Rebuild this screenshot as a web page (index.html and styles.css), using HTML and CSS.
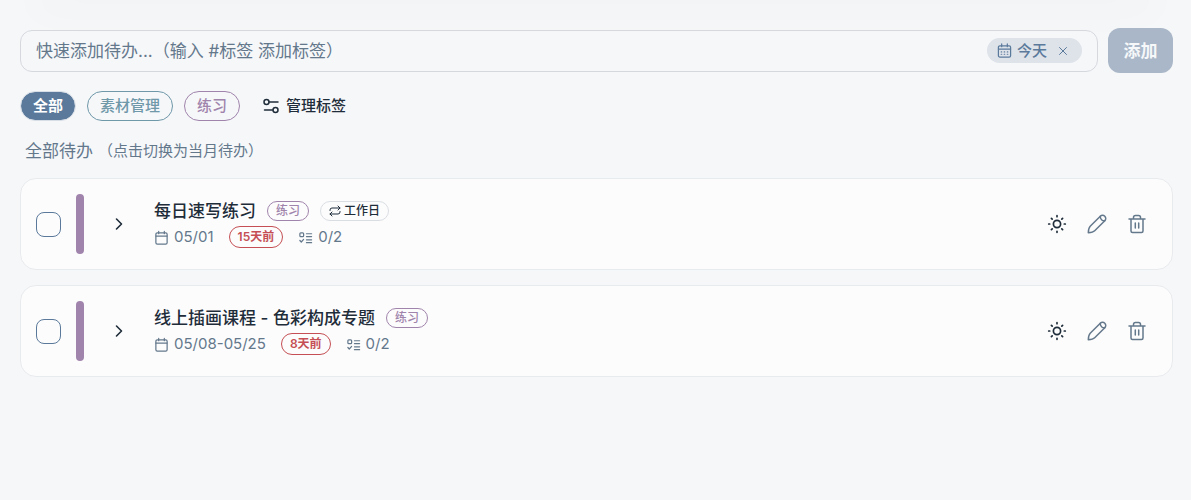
FILE: index.html
```html
<!DOCTYPE html>
<html lang="zh-CN">
<head>
  <meta charset="UTF-8">
  <meta name="viewport" content="width=device-width, initial-scale=1.0">
  <title>待办</title>
  <link rel="stylesheet" href="styles.css">
</head>
<body>
  <svg class="sprite" aria-hidden="true">
    <symbol id="i-cal" viewBox="0 0 16 16"><rect x="2" y="3" width="12" height="12" rx="1.5"/><path d="M2 6.5h12M5 1.5V4M11 1.5V4"/></symbol>
    <symbol id="i-check" viewBox="0 0 16 16"><rect x="2" y="3" width="4" height="4" rx="1"/><path d="M2 11.2l1.5 1.6L6 10M9 4H14.500M9 7H14.500M9 10.500H14.500M9 13.500H14.500"/></symbol>
    <symbol id="i-chevron" viewBox="0 0 16 16"><path d="M5.5 3l5 5-5 5"/></symbol>
    <symbol id="i-sun" viewBox="0 0 20 20"><circle cx="10" cy="10" r="3.6"/><path d="M10 1.7v1M10 17.3v1M1.7 10h1M17.3 10h1M4.400 4.400l.8.8M14.800 14.800l.8.8M4.400 15.600l.8-.8M14.800 5.200l.8-.8"/></symbol>
    <symbol id="i-pencil" viewBox="0 0 20 20"><path d="M13.300 2.200L3.200 12.300C2.200 13.300 1.400 16.200 1.300 18.700c2.500-.1 5.400-.9 6.400-1.900L17.800 6.700"/><path d="M13.300 2.200a3.100 3.100 0 0 1 4.500 4.500c-2.200.6-5-1.700-4.500-4.500z"/></symbol>
    <symbol id="i-trash" viewBox="0 0 20 20"><path d="M2 5h16M4 5v12a1.500 1.500 0 0 0 1.500 1.500h9A1.500 1.500 0 0 0 16 17V5M6.500 5V3.500A2 2 0 0 1 8.500 1.500h3a2 2 0 0 1 2 2V5M8.300 9v5M11.700 9v5"/></symbol>
  </svg>

  <header class="topbar"></header>

  <main class="page">
    <form class="quick-add">
      <div class="field">
        <input type="text" aria-label="快速添加待办" placeholder="快速添加待办...（输入 #标签 添加标签）">
        <button type="button" class="date-chip">
          <svg class="icon" viewBox="0 0 16 16"><rect x="1.5" y="3" width="13" height="12" rx="1.5"/><path d="M1.5 6.5h13M5 1v3M11 1v3"/><path d="M4.5 9.5h.5M7.700 9.500h.5M11 9.500h.5M4.500 12h.5M7.700 12h.5M11 12h.5"/></svg>
          今天
          <svg class="close" viewBox="0 0 10 10"><path d="M1.5 1.5l7 7M8.5 1.5l-7 7"/></svg>
        </button>
      </div>
      <button type="submit" class="add">添加</button>
    </form>

    <div class="filters">
      <button class="filter active">全部</button>
      <button class="filter teal">素材管理</button>
      <button class="filter purple">练习</button>
      <button class="manage">
        <svg viewBox="0 0 16 16"><circle cx="3.5" cy="4" r="2.5"/><path d="M6.5 4H15"/><circle cx="12.5" cy="12" r="2.5"/><path d="M9.5 12H1.5"/></svg>
        管理标签
      </button>
    </div>

    <button class="scope">全部待办<small>（点击切换为当月待办）</small></button>

    <ul class="todos">
      <li class="todo">
        <input type="checkbox" aria-label="完成 每日速写练习">
        <span class="stripe"></span>
        <button class="expand" aria-label="展开"><svg><use href="#i-chevron"/></svg></button>
        <div class="body">
          <div class="title">
            <span>每日速写练习</span>
            <span class="tag">练习</span>
            <span class="tag repeat"><svg viewBox="0 0 12 12"><path d="M1 5.5V5q0-2 2-2h8M9 1l2 2-2 2M11 6.5V7q0 2-2 2H1M3 7L1 9l2 2"/></svg>工作日</span>
          </div>
          <div class="meta">
            <span class="info"><svg><use href="#i-cal"/></svg>05/01</span>
            <span class="overdue">15天前</span>
            <span class="info"><svg><use href="#i-check"/></svg>0/2</span>
          </div>
        </div>
        <div class="actions">
          <button class="dark" aria-label="加入今天"><svg><use href="#i-sun"/></svg></button>
          <button aria-label="编辑"><svg><use href="#i-pencil"/></svg></button>
          <button aria-label="删除"><svg><use href="#i-trash"/></svg></button>
        </div>
      </li>
      <li class="todo">
        <input type="checkbox" aria-label="完成 线上插画课程">
        <span class="stripe"></span>
        <button class="expand" aria-label="展开"><svg><use href="#i-chevron"/></svg></button>
        <div class="body">
          <div class="title">
            <span>线上插画课程 - 色彩构成专题</span>
            <span class="tag">练习</span>
          </div>
          <div class="meta">
            <span class="info"><svg><use href="#i-cal"/></svg>05/08-05/25</span>
            <span class="overdue">8天前</span>
            <span class="info"><svg><use href="#i-check"/></svg>0/2</span>
          </div>
        </div>
        <div class="actions">
          <button class="dark" aria-label="加入今天"><svg><use href="#i-sun"/></svg></button>
          <button aria-label="编辑"><svg><use href="#i-pencil"/></svg></button>
          <button aria-label="删除"><svg><use href="#i-trash"/></svg></button>
        </div>
      </li>
    </ul>
  </main>
</body>
</html>
```
FILE: styles.css
```css
* { box-sizing: border-box; }
body { margin: 0; background: #f6f7f9; color: #1f2d3a; font-family: Inter, "Noto Sans CJK SC", sans-serif; font-size: 15px; line-height: 20px; }
button, input { font: inherit; color: inherit; margin: 0; }
button { background: none; border: 0; padding: 0; cursor: pointer; }
svg { display: block; flex: none; fill: none; stroke: currentColor; stroke-width: 1.3; stroke-linecap: round; stroke-linejoin: round; }
.sprite { display: none; }

.topbar { height: 0; margin: 0 40px; box-shadow: 0 0 40px 6px rgba(31, 45, 58, 0.05); }
.page { padding: 28px 18px 20px 20px; }

.quick-add { display: flex; align-items: center; gap: 10px; }
.field { flex: 1; display: flex; align-items: center; height: 42px; padding: 0 15px; border: 1px solid #d5d9de; border-radius: 12px; }
.field input { flex: 1; min-width: 0; padding: 0; border: 0; outline: 0; background: none; font-size: 17px; line-height: 24px; }
.field input::placeholder { color: #64788c; opacity: 1; }
.date-chip { display: flex; align-items: center; gap: 5px; height: 25px; padding: 0 14px 0 10px; border-radius: 13px; background: #dee3ea; color: #5b7a9b; font-weight: 500; }
.date-chip .icon { width: 15px; height: 15px; }
.date-chip .close { width: 10px; height: 10px; margin-left: 6px; stroke-width: 1; }
.add { width: 65px; height: 45px; border-radius: 12px; background: #a9b7c8; color: #f6f8fa; font-size: 17px; font-weight: 700; }

.filters { display: flex; align-items: center; gap: 11px; margin-top: 18px; }
.filter { height: 30px; padding: 0 12px; border: 1px solid; border-radius: 15px; font-weight: 500; }
.filter.active { background: #5b7a9b; background-clip: padding-box; border-color: #d8dee6; color: #fff; font-weight: 700; }
.teal { color: #6f98a9; }
.purple { color: #a084ac; }
.manage { display: flex; align-items: center; gap: 7px; margin-left: 12px; font-weight: 500; }
.manage svg { width: 16px; height: 16px; stroke-width: 1.5; }

.scope { display: flex; align-items: center; height: 30px; margin: 15px 0 12px 5px; color: #64788c; font-size: 17px; }
.scope small { margin-left: 5px; font-size: 15px; }

.todos { display: flex; flex-direction: column; gap: 15px; margin: 0; padding: 0; list-style: none; }
.todo { display: flex; align-items: center; padding: 15px; border: 1px solid #e8ebee; border-radius: 16px; background: #fcfcfc; }
.todo input { appearance: none; width: 25px; height: 25px; border: 1px solid #5b7a9b; border-radius: 8px; }
.stripe { width: 8px; height: 60px; margin-left: 15px; border-radius: 4px; background: #a084ac; }
.expand { margin: 0 27px; }
.expand svg { width: 16px; height: 16px; stroke-width: 1.6; }
.body { flex: 1; min-width: 0; }
.title, .meta { display: flex; align-items: center; }
.title { gap: 11px; height: 26px; font-size: 17px; font-weight: 500; }
.tag { display: flex; align-items: center; gap: 3px; height: 20px; padding: 0 8px; border: 1px solid #a084ac; border-radius: 10px; color: #a084ac; font-size: 12px; font-weight: 500; }
.repeat { border-color: #dadee3; color: #1f2d3a; }
.repeat svg { width: 12px; height: 12px; stroke-width: 1; }
.meta { gap: 15px; height: 26px; color: #64788c; }
.info { display: flex; align-items: center; gap: 5px; }
.info svg { width: 15px; height: 15px; }
.overdue { height: 22px; padding: 0 8px; border: 1px solid #c54f54; border-radius: 11px; color: #c54f54; font-size: 12px; font-weight: 600; }
.actions { display: flex; gap: 20px; padding-right: 10px; color: #64788c; }
.actions svg { width: 20px; height: 20px; stroke-width: 1.5; }
.actions .dark { color: #1f2d3a; }
.dark svg { stroke-width: 1.7; }
```
